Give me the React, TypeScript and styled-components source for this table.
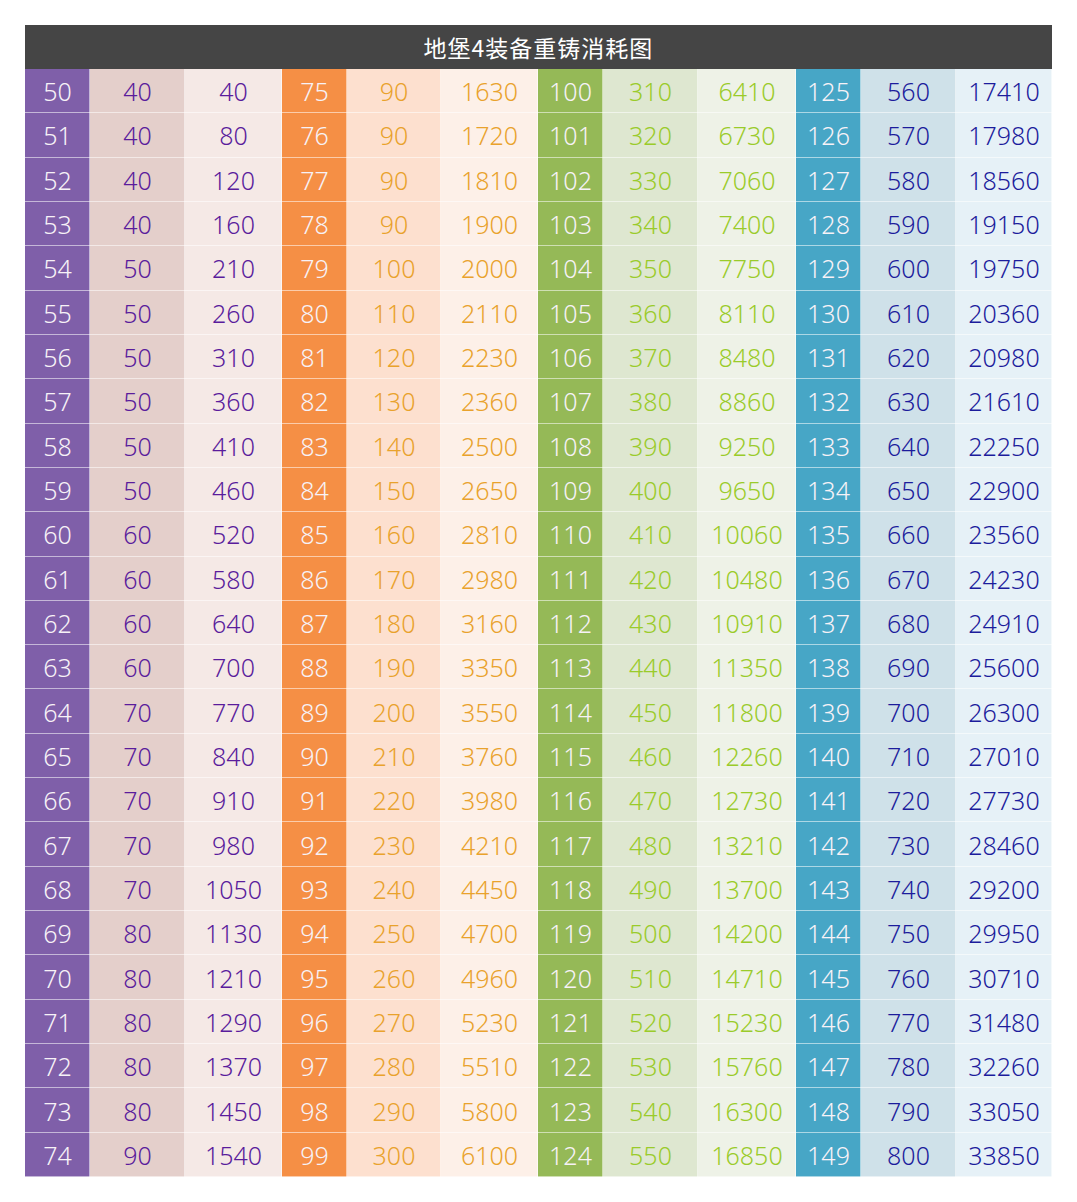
import React from "react";
import styled, { createGlobalStyle } from "styled-components";

const Global = createGlobalStyle`
  html, body { margin: 0; padding: 0; background: #ffffff; }
  body { font-family: "Noto Sans", "Noto Sans CJK SC", sans-serif; }
`;

type Tone = {
  dark: string;
  mid: string;
  light: string;
  ink: string;
};

const tones: Tone[] = [
  { dark: "#7f5fa9", mid: "#e4cfcb", light: "#f5e9e6", ink: "#5a1c9c" },
  { dark: "#f58f45", mid: "#fde0cf", light: "#fdf0e8", ink: "#e9a22c" },
  { dark: "#95b957", mid: "#dee7d0", light: "#eef2e7", ink: "#9acb2a" },
  { dark: "#47a6c6", mid: "#cfe1e9", light: "#e6f1f7", ink: "#1c1c9c" },
];

const range = (start: number, step: number) =>
  Array.from({ length: 25 }, (_, i) => start + step * i);

const groups: number[][][] = [
  [
    range(50, 1),
    [40, 40, 40, 40, 50, 50, 50, 50, 50, 50, 60, 60, 60, 60, 70, 70, 70, 70, 70, 80, 80, 80, 80, 80, 90],
    [40, 80, 120, 160, 210, 260, 310, 360, 410, 460, 520, 580, 640, 700, 770, 840, 910, 980, 1050, 1130, 1210, 1290, 1370, 1450, 1540],
  ],
  [
    range(75, 1),
    [90, 90, 90, 90, 100, 110, 120, 130, 140, 150, 160, 170, 180, 190, 200, 210, 220, 230, 240, 250, 260, 270, 280, 290, 300],
    [1630, 1720, 1810, 1900, 2000, 2110, 2230, 2360, 2500, 2650, 2810, 2980, 3160, 3350, 3550, 3760, 3980, 4210, 4450, 4700, 4960, 5230, 5510, 5800, 6100],
  ],
  [
    range(100, 1),
    range(310, 10),
    [6410, 6730, 7060, 7400, 7750, 8110, 8480, 8860, 9250, 9650, 10060, 10480, 10910, 11350, 11800, 12260, 12730, 13210, 13700, 14200, 14710, 15230, 15760, 16300, 16850],
  ],
  [
    range(125, 1),
    range(560, 10),
    [17410, 17980, 18560, 19150, 19750, 20360, 20980, 21610, 22250, 22900, 23560, 24230, 24910, 25600, 26300, 27010, 27730, 28460, 29200, 29950, 30710, 31480, 32260, 33050, 33850],
  ],
];

const widths = [65, 95, 97, 65, 94, 97, 65, 95, 98, 65, 95, 96];

const Page = styled.div`
  padding: 25px 0 0 25px;
`;

const Sheet = styled.div`
  width: 1027px;
`;

const Title = styled.div`
  height: 44px;
  background: #454545;
  color: #ffffff;
  font-size: 23px;
  line-height: 44px;
  text-align: center;
  font-family: "Noto Sans CJK SC", "Noto Sans", sans-serif;
  letter-spacing: 1px;
`;

const Grid = styled.div`
  display: grid;
  grid-template-columns: ${widths.map((w) => `${w}px`).join(" ")};
  grid-template-rows: repeat(25, 1fr);
  height: 1108px;
`;

const Cell = styled.div<{ $bg: string; $ink: string }>`
  background: ${(p) => p.$bg};
  color: ${(p) => p.$ink};
  display: flex;
  align-items: center;
  justify-content: center;
  font-family: "Noto Sans", sans-serif;
  font-size: 25px;
  font-weight: 300;
  box-shadow: inset 0 -1px 0 rgba(255, 255, 255, 0.55),
    inset -1px 0 0 rgba(255, 255, 255, 0.55);
`;

export default function App() {
  const cells: React.ReactNode[] = [];
  for (let r = 0; r < 25; r++) {
    groups.forEach((g, gi) => {
      const t = tones[gi];
      cells.push(
        <Cell key={`${r}-${gi}-0`} $bg={t.dark} $ink="#f7f2f7">
          {g[0][r]}
        </Cell>
      );
      cells.push(
        <Cell key={`${r}-${gi}-1`} $bg={t.mid} $ink={t.ink}>
          {g[1][r]}
        </Cell>
      );
      cells.push(
        <Cell key={`${r}-${gi}-2`} $bg={t.light} $ink={t.ink}>
          {g[2][r]}
        </Cell>
      );
    });
  }
  return (
    <Page>
      <Global />
      <Sheet>
        <Title>地堡4装备重铸消耗图</Title>
        <Grid>{cells}</Grid>
      </Sheet>
    </Page>
  );
}
